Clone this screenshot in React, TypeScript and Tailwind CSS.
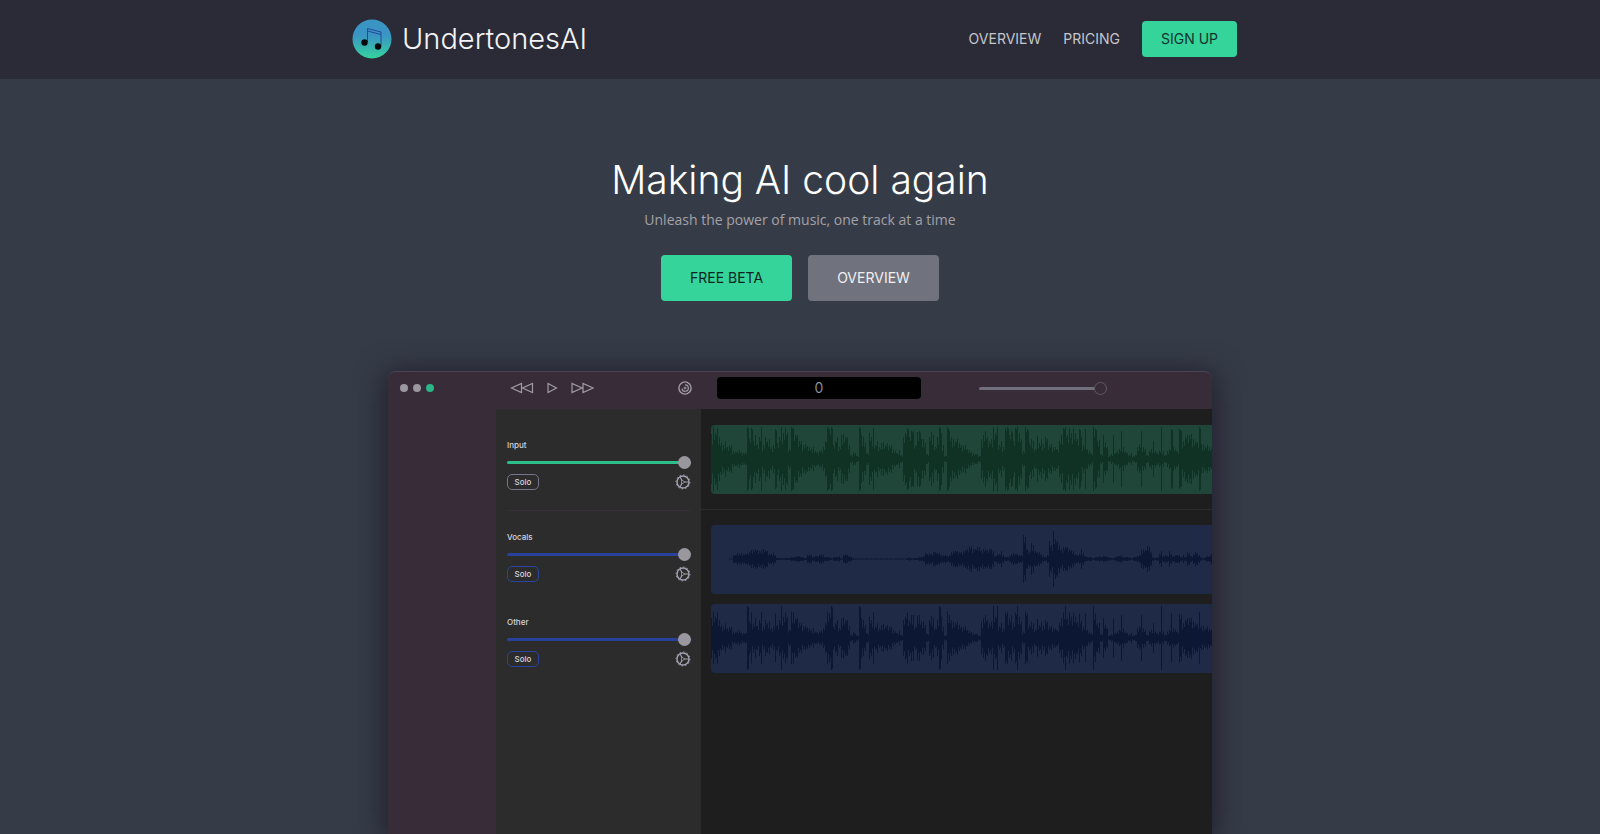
import type { ReactNode } from "react";

// Peak heights, one per 2px of timeline, on a scale of 0 to 34
const MIX_PEAKS = [
  25, 32, 26, 31, 22, 16, 14, 18, 12, 13, 14, 8, 7, 8, 9, 7, 6, 6, 32, 20, 31, 18, 24, 15, 22, 32,
  14, 22, 18, 20, 12, 14, 30, 16, 22, 32, 26, 31, 26, 10, 32, 31, 24, 24, 18, 18, 14, 15, 13, 12,
  10, 12, 8, 7, 8, 9, 12, 18, 32, 30, 32, 14, 18, 22, 12, 24, 25, 22, 22, 14, 4, 7, 6, 3, 32, 24,
  22, 16, 6, 26, 22, 31, 14, 18, 12, 16, 17, 14, 16, 13, 14, 10, 8, 6, 9, 4, 22, 26, 31, 22, 28,
  28, 14, 27, 28, 20, 20, 16, 5, 22, 27, 24, 12, 22, 32, 26, 14, 3, 32, 28, 22, 20, 18, 20, 16,
  14, 13, 14, 10, 9, 7, 6, 5, 5, 3, 20, 24, 28, 22, 18, 20, 32, 26, 32, 14, 18, 12, 31, 32, 24,
  28, 18, 31, 32, 26, 20, 8, 32, 30, 16, 20, 18, 10, 23, 16, 20, 15, 22, 20, 14, 15, 12, 12, 10,
  18, 24, 31, 32, 24, 31, 26, 31, 26, 20, 30, 22, 14, 30, 10, 8, 6, 32, 30, 18, 19, 5, 24, 16, 12,
  3, 5, 24, 6, 8, 10, 28, 12, 8, 6, 4, 6, 3, 4, 12, 14, 28, 12, 10, 4, 8, 10, 18, 8, 6, 8, 32, 8,
  4, 8, 10, 30, 12, 10, 8, 30, 28, 18, 22, 24, 24, 25, 20, 18, 17, 32, 15, 14, 12, 14, 12, 10,
];

const VOCAL_PEAKS = [
  0, 0, 0, 0, 0, 0, 0, 0, 0, 0.4, 0.4, 4, 4, 6, 5, 6, 5, 5, 6, 7, 9, 9, 10, 9, 8, 9, 10, 9, 8, 5,
  5, 6, 4, 1, 1, 1, 1, 1, 1, 1, 2, 2, 2, 3, 3, 2, 2, 1, 4, 5, 4, 2, 3, 3, 4, 5, 4, 2, 2, 2, 1, 2,
  2, 2, 3, 1, 4, 5, 4, 3, 2, 1, 0.5, 0.5, 0.5, 0.5, 0.5, 0.5, 0.5, 0.5, 0.5, 0.5, 0.5, 0.5, 0.5,
  0.5, 0.5, 0.5, 0.5, 0.5, 0.5, 0.5, 0.5, 0.5, 0.5, 0.5, 0.5, 0.5, 1, 2, 1, 1, 1, 1, 2, 2, 3, 6,
  5, 6, 5, 7, 7, 6, 6, 4, 4, 4, 3, 4, 7, 8, 8, 8, 7, 7, 8, 9, 10, 12, 13, 10, 10, 12, 12, 9, 10,
  10, 9, 10, 10, 8, 3, 5, 5, 8, 4, 2, 2, 3, 5, 6, 5, 5, 4, 4, 24, 22, 10, 8, 16, 14, 8, 7, 7, 5,
  3, 2, 4, 18, 14, 28, 20, 18, 14, 10, 12, 12, 12, 10, 9, 8, 5, 4, 5, 10, 6, 3, 2, 2, 2, 1, 2, 2,
  3, 2, 3, 3, 2, 2, 1, 1, 2, 3, 3, 4, 2, 2, 2, 2, 1, 2, 2, 3, 4, 9, 10, 9, 13, 12, 7, 2, 1, 2, 5,
  8, 3, 4, 3, 8, 5, 3, 4, 4, 4, 2, 4, 2, 7, 6, 3, 5, 7, 6, 4, 2, 1, 2, 3, 3, 5, 5, 3,
];

const OTHER_PEAKS = MIX_PEAKS.map((peak, i) => (peak > 31 && i % 3 !== 1 ? 32 : peak * 0.82));

const CHANNELS = [
  { name: "Vocals", peaks: VOCAL_PEAKS },
  { name: "Other", peaks: OTHER_PEAKS },
];

const RANGE_BASE =
  "block h-[13px] w-full appearance-none bg-transparent [&::-webkit-slider-runnable-track]:h-[3px] [&::-webkit-slider-runnable-track]:rounded-full [&::-webkit-slider-thumb]:-mt-[5px] [&::-webkit-slider-thumb]:size-[13px] [&::-webkit-slider-thumb]:appearance-none [&::-webkit-slider-thumb]:rounded-full";

function wavePath(peaks: number[]) {
  return peaks
    .map((peak, i) => {
      const next = peaks[i + 1] ?? peak;
      const between =
        peak >= 28 && i % 2 === 0
          ? peak * 0.95
          : Math.min(peak, next) * (0.58 + ((i * 7) % 5) * 0.08);
      const x = i * 2;
      return `M${x} ${34 - peak}h1V${34 + peak}h-1zM${x + 1} ${34 - between}h1V${34 + between}h-1z`;
    })
    .join("");
}

function Waveform({ peaks, green }: { peaks: number[]; green?: boolean }) {
  return (
    <div
      className={`h-[69px] overflow-hidden rounded-l ${green ? "bg-[#20463a]" : "bg-[#1f2a46]"}`}
    >
      <svg
        className={`h-full w-full ${green ? "fill-[#0f3225]" : "fill-[#0c1833]"}`}
        viewBox="0 0 501 69"
        preserveAspectRatio="none"
        aria-hidden="true"
      >
        <path d={wavePath(peaks)} />
      </svg>
    </div>
  );
}

function GearIcon() {
  return (
    <svg className="size-4" viewBox="0 0 16 16" fill="none" stroke="#a09fae" aria-hidden="true">
      <circle cx="8" cy="8" r="6" strokeWidth="1.5" />
      <circle cx="8" cy="8" r="7" strokeWidth="1" strokeDasharray="1.4 2.26" />
      <path d="M9.500 8h4.500M7 6.500 5 3M7 9.500 5 13" strokeWidth="1.2" />
      <path d="M6.500 6 10 8l-3.500 2z" strokeWidth="0.8" />
    </svg>
  );
}

function DiscIcon() {
  return (
    <svg className="size-3.5" viewBox="0 0 14 14" fill="none" stroke="#a09aa6" aria-hidden="true">
      <circle cx="7" cy="7" r="6.1" strokeWidth="1.4" />
      <path d="M4 7.600A3.200 3.200 0 1 0 7 3.900" strokeWidth="1.2" />
      <path d="M5.500 7h3M7 5.800v2.400" strokeWidth="1.2" />
    </svg>
  );
}

function Logo() {
  return (
    <svg className="size-10" viewBox="0 0 40 40" aria-hidden="true">
      <defs>
        <linearGradient id="logo-fill" x1="0" y1="0" x2="0" y2="1">
          <stop offset="0.4" stopColor="#3a94c4" />
          <stop offset="1" stopColor="#35d39c" />
        </linearGradient>
      </defs>
      <circle cx="20" cy="20" r="19.5" fill="url(#logo-fill)" />
      <path
        d="M15.500 23V9.500M29 13v14M15.500 9.500 29 13M15.500 12 29 15.500"
        fill="none"
        stroke="#24489a"
        strokeWidth="1"
      />
      <circle cx="12.500" cy="23.500" r="3.200" fill="#050b0c" />
      <circle cx="26" cy="27.500" r="3.200" fill="#050b0c" />
    </svg>
  );
}

function IconButton({ label, children }: { label: string; children: ReactNode }) {
  return (
    <button type="button" aria-label={label} className="flex items-center">
      {children}
    </button>
  );
}

function Channel({ name, green }: { name: string; green?: boolean }) {
  const id = `volume-${name.toLowerCase()}`;

  return (
    <div className="flex flex-col gap-[5px]">
      <label htmlFor={id} className="text-[8px] leading-3 font-medium text-[#d6d5dd]">
        {name}
      </label>
      <input
        id={id}
        type="range"
        defaultValue={100}
        className={`${RANGE_BASE} [&::-webkit-slider-thumb]:bg-[#9b979e] ${
          green
            ? "[&::-webkit-slider-runnable-track]:bg-[#2cbf8c]"
            : "[&::-webkit-slider-runnable-track]:bg-[#28419a]"
        }`}
      />
      <div className="flex h-4 items-center justify-between">
        <button
          type="button"
          className={`h-full w-8 rounded-[5px] border text-[8px] leading-3 font-medium text-[#d6d5dd] ${
            green ? "border-[#77748a]" : "border-[#2a449f]"
          }`}
        >
          Solo
        </button>
        <IconButton label={`${name} settings`}>
          <GearIcon />
        </IconButton>
      </div>
    </div>
  );
}

function Player() {
  return (
    <section
      aria-label="UndertonesAI player"
      className="flex w-full max-w-[824px] flex-1 flex-col overflow-hidden rounded-t-lg border-t border-[#4b4552] bg-[#382c39] shadow-[0_4px_28px_4px_rgba(26,22,38,0.75)]"
    >
      <div className="grid grid-cols-[108px_205px_1fr] pt-[5px] pb-2.5">
        <div className="flex h-[22px] items-center gap-[5px] pl-3">
          <span className="size-2 rounded-full bg-[#9b979e]" />
          <span className="size-2 rounded-full bg-[#9b979e]" />
          <span className="size-2 rounded-full bg-[#2cb586]" />
        </div>
        <div className="flex items-center pr-[9px] pl-3.5">
          <IconButton label="Rewind">
            <svg className="h-3 w-6" viewBox="0 0 24 12" fill="none" stroke="#a09aa6">
              <path d="M11.500 1.500v9L1.500 6zM22.500 1.500v9L12.500 6z" strokeWidth="1.2" />
            </svg>
          </IconButton>
          <span className="w-3" />
          <IconButton label="Play">
            <svg className="h-3 w-3" viewBox="0 0 12 12" fill="none" stroke="#a09aa6">
              <path d="M2 1.500v9L10.500 6z" strokeWidth="1.200" />
            </svg>
          </IconButton>
          <span className="w-3" />
          <IconButton label="Fast forward">
            <svg className="h-3 w-6" viewBox="0 0 24 12" fill="none" stroke="#a09aa6">
              <path d="M2 1.500v9L12 6zM13 1.500v9L23 6z" strokeWidth="1.2" />
            </svg>
          </IconButton>
          <span className="flex-1" />
          <IconButton label="Separate">
            <DiscIcon />
          </IconButton>
        </div>
        <div className="flex items-center gap-[58px] pl-4">
          <output className="h-[22px] w-[204px] rounded bg-black text-center text-sm leading-[22px] text-[#8d8a94]">
            0
          </output>
          <div className="w-32">
            <input
              type="range"
              aria-label="Master volume"
              defaultValue={100}
              className={`${RANGE_BASE} [&::-webkit-slider-runnable-track]:bg-[#706f7b] [&::-webkit-slider-thumb]:border [&::-webkit-slider-thumb]:border-[#5d5866] [&::-webkit-slider-thumb]:bg-[#382c39]`}
            />
          </div>
        </div>
      </div>

      <div className="grid flex-1 grid-cols-[205px_1fr] pl-[108px]">
        <div className="bg-[#2c2c2c] pt-[30px] pr-2.5 pl-[11px]">
          <div className="border-b border-[#37303a] pb-5">
            <Channel name="Input" green />
          </div>
          <div className="flex flex-col gap-[34px] pt-5">
            {CHANNELS.map((channel) => (
              <Channel key={channel.name} name={channel.name} />
            ))}
          </div>
        </div>
        <div className="bg-[#1e1e1e]">
          <div className="border-b border-[#2b2b2b] pt-4 pb-[15px] pl-2.5">
            <Waveform peaks={MIX_PEAKS} green />
          </div>
          <div className="flex flex-col gap-2.5 pt-[15px] pl-2.5">
            {CHANNELS.map((channel) => (
              <Waveform key={channel.name} peaks={channel.peaks} />
            ))}
          </div>
        </div>
      </div>
    </section>
  );
}

export default function App() {
  return (
    <div className="flex h-screen flex-col overflow-hidden bg-[#363c47] font-['Inter',sans-serif]">
      <header className="bg-[#2a2b37] pb-px">
        <div className="mx-auto flex h-[78px] max-w-4xl items-center justify-between pr-[11px]">
          <a href="#" className="flex items-center gap-2.5 text-[29px] font-light text-[#f4f4f6]">
            <Logo />
            UndertonesAI
          </a>
          <nav className="flex items-center gap-[22px] text-sm text-[#c6c6cb]">
            <a href="#overview">OVERVIEW</a>
            <a href="#pricing">PRICING</a>
            <a
              href="#signup"
              className="w-[95px] rounded bg-[#34d49b] py-2 text-center text-[#17332b]"
            >
              SIGN UP
            </a>
          </nav>
        </div>
      </header>

      <main className="flex flex-1 flex-col items-center pt-[81px]">
        <h1 className="text-[39px] leading-10 font-light text-white">Making AI cool again</h1>
        <p className="mt-2.5 font-['Open_Sans',sans-serif] text-sm leading-5 text-[#a3a1a8]">
          Unleash the power of music, one track at a time
        </p>
        <div className="mt-[25px] mb-[70px] flex gap-4 text-sm leading-[46px]">
          <button type="button" className="w-[131px] rounded bg-[#34d49b] text-[#10241e]">
            FREE BETA
          </button>
          <button type="button" className="w-[131px] rounded bg-[#70737e] text-[#f0f0f2]">
            OVERVIEW
          </button>
        </div>
        <Player />
      </main>
    </div>
  );
}
